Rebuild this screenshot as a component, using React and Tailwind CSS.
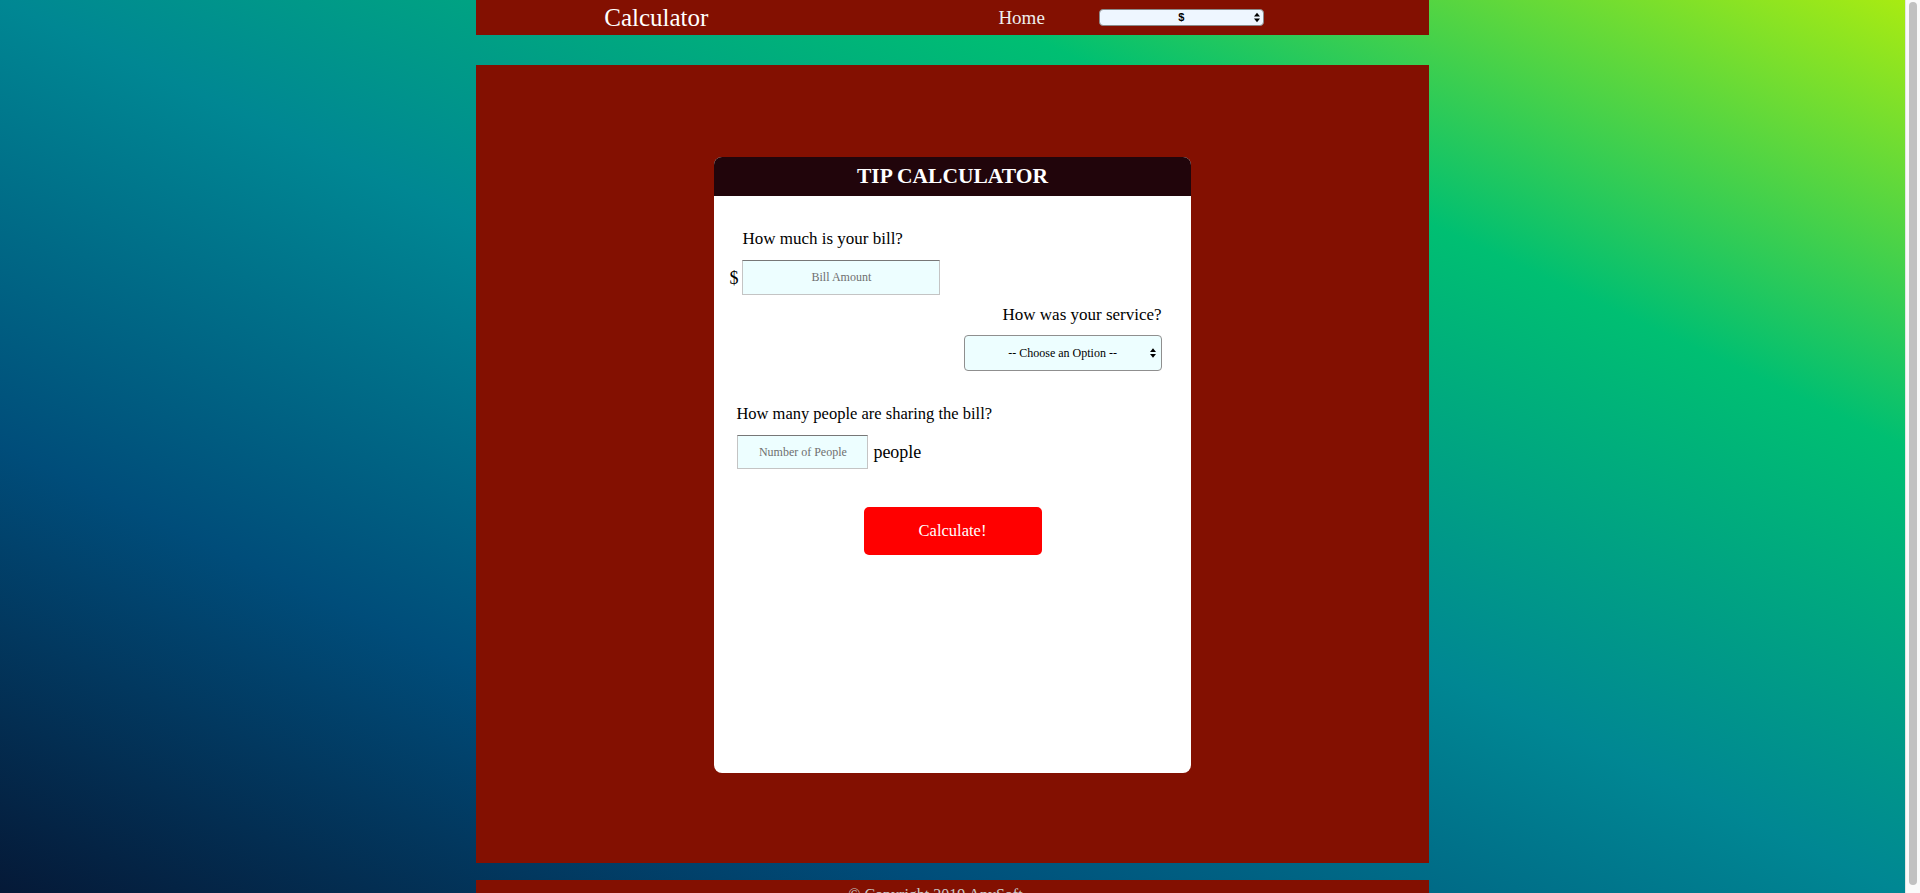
import { useState } from "react";

const serif = "font-['Liberation_Serif','Times_New_Roman',serif]";

function Arrows({ className }) {
  return (
    <svg className={className} width="7" height="11" viewBox="0 0 7 11" fill="currentColor">
      <path d="M3.5 0 L7 4.3 H0 Z" />
      <path d="M3.5 11 L7 6.7 H0 Z" />
    </svg>
  );
}

export default function App() {
  const [bill, setBill] = useState("");
  const [service, setService] = useState("");
  const [people, setPeople] = useState("");
  const [currency, setCurrency] = useState("$");

  return (
    <div className={`${serif} flex h-screen overflow-hidden`}>
      <div className="flex-1 min-w-0 h-full overflow-hidden bg-[linear-gradient(to_right_top,#051937,#004d7a,#008793,#00bf72,#a8eb12)]">
        {/* Top nav */}
        <header className="w-1/2 mx-auto h-[35px] bg-[#831001] flex items-center">
          <h1 className="ml-[128px] text-[25px] leading-none text-white">Calculator</h1>
          <a className="ml-[290px] text-[19px] leading-none text-[#eee]">Home</a>
          <div className="relative ml-[54px] w-[165px] h-[17px] self-center -mt-[1px]">
            <select
              value={currency}
              onChange={(e) => setCurrency(e.target.value)}
              className="block appearance-none w-[165px] h-[17px] p-0 rounded-[4px] border border-[#8a8a8a] bg-[#eef6ff] text-[11px] leading-[15px] text-black font-bold font-['Liberation_Sans',sans-serif] [text-align-last:center] outline-none"
            >
              <option value="$">$</option>
              <option value="€">€</option>
              <option value="£">£</option>
            </select>
            <Arrows className="pointer-events-none absolute right-[4px] top-[3px] w-[6px] h-[11px] text-black" />
          </div>
        </header>

        {/* Main panel */}
        <main className="w-1/2 mx-auto mt-[30px] h-[798px] bg-[#831001] pt-[92px]">
          <div className="w-1/2 mx-auto h-[616px] bg-white rounded-[8px] overflow-hidden">
            <div className="h-[39px] bg-[#21050b] flex items-center justify-center">
              <h2 className="text-[21.5px] font-bold text-white leading-none">TIP CALCULATOR</h2>
            </div>

            <div className="flex flex-col">
              <p className="mt-[31px] pl-[28px] text-[17px] leading-[24px] text-black">How much is your bill?</p>

              <div className="mt-[9px] pl-[15px] flex items-center">
                <span className="w-[13px] text-[18px] leading-none text-black">$</span>
                <input
                  value={bill}
                  onChange={(e) => setBill(e.target.value)}
                  placeholder="Bill Amount"
                  className="w-[198px] h-[35px] bg-[#edfeff] border border-[#c4c4c4] border-t-[#777] text-center text-[12px] placeholder:text-[#6f6f6f] outline-none"
                />
              </div>

              <p className="mt-[8px] pr-[29px] text-right text-[17px] leading-[24px] text-black">How was your service?</p>

              <div className="mt-[8px] pr-[29px] flex justify-end">
                <div className="relative w-[198px] h-[36px]">
                  <select
                    value={service}
                    onChange={(e) => setService(e.target.value)}
                    className="appearance-none w-full h-full rounded-[4px] border border-[#8f8f8f] bg-[#edfeff] text-[12px] text-black [text-align-last:center] outline-none"
                  >
                    <option value="" disabled>-- Choose an Option --</option>
                    <option value="0.3">30% - Outstanding</option>
                    <option value="0.2">20% - Good</option>
                    <option value="0.15">15% - It was OK</option>
                    <option value="0.1">10% - Bad</option>
                    <option value="0.05">5% - Terrible</option>
                  </select>
                  <Arrows className="pointer-events-none absolute right-[6px] top-[13px] w-[6px] h-[10px] text-black" />
                </div>
              </div>

              <p className="mt-[31px] pl-[22px] text-[16.5px] leading-[24px] text-black">How many people are sharing the bill?</p>

              <div className="mt-[9px] pl-[23px] flex items-center">
                <input
                  value={people}
                  onChange={(e) => setPeople(e.target.value)}
                  placeholder="Number of People"
                  className="w-[131px] h-[34px] bg-[#edfeff] border border-[#c4c4c4] border-t-[#777] text-center text-[12px] placeholder:text-[#6f6f6f] outline-none"
                />
                <span className="ml-[5px] text-[18px] leading-none text-black">people</span>
              </div>

              <div className="mt-[38px] flex justify-center">
                <button className="w-[178px] h-[48px] bg-[#ff0000] rounded-[5px] text-white text-[16.5px]">
                  Calculate!
                </button>
              </div>
            </div>
          </div>
        </main>

        {/* Footer */}
        <footer className="w-1/2 mx-auto mt-[17px] h-[30px] bg-[#831001] pt-[4px] pl-[372px] text-[16px] leading-[22px] text-[#c9c9c9]">
          © Copyright 2019 AnySoft
        </footer>
      </div>

      {/* Page scrollbar */}
      <div className="w-[15px] h-full shrink-0 bg-[#fafafa] border-l border-[#e4e4e4] px-[3px] py-[2px]">
        <div className="h-[883px] rounded-full bg-[#c1c1c1]" />
      </div>
    </div>
  );
}
